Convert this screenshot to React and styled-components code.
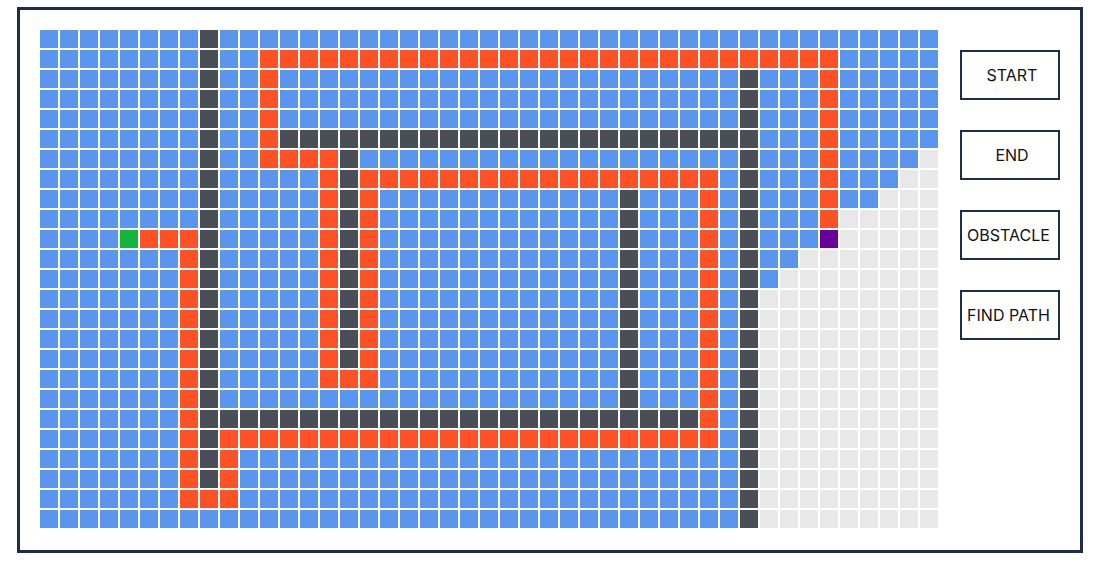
import React from 'react';
import styled, { createGlobalStyle } from 'styled-components';

const COLS = 45;
const ROWS = 25;

const walls = [
  // [c1, r1, c2, r2]
  [8, 0, 8, 22],
  [12, 5, 35, 5],
  [35, 2, 35, 24],
  [15, 6, 15, 16],
  [29, 8, 29, 18],
  [9, 19, 32, 19],
];

const path = [
  [5, 10, 7, 10],
  [7, 10, 7, 23],
  [7, 23, 9, 23],
  [9, 20, 9, 23],
  [9, 20, 33, 20],
  [33, 7, 33, 20],
  [16, 7, 33, 7],
  [16, 7, 16, 17],
  [14, 17, 16, 17],
  [14, 6, 14, 17],
  [11, 6, 14, 6],
  [11, 1, 11, 6],
  [11, 1, 39, 1],
  [39, 1, 39, 9],
];

// first unvisited column for each row, the rest stays blue
const unvisitedFrom = { 6: 44, 7: 43, 8: 42, 9: 40, 10: 40, 11: 38, 12: 37 };

const inSegments = (segments, c, r) =>
  segments.some(([c1, r1, c2, r2]) => c >= c1 && c <= c2 && r >= r1 && r <= r2);

const cellType = (c, r) => {
  if (c === 4 && r === 10) return 'start';
  if (c === 39 && r === 10) return 'end';
  if (inSegments(walls, c, r)) return 'wall';
  if (inSegments(path, c, r)) return 'path';
  const from = r >= 13 ? 36 : unvisitedFrom[r];
  if (from !== undefined && c >= from) return 'empty';
  return 'visited';
};

const colors = {
  visited: '#5a96ee',
  wall: '#4a4e57',
  path: '#ff5126',
  start: '#15b53b',
  end: '#6a009c',
  empty: '#e8e8e8',
};

const buttons = [
  { label: 'START' },
  { label: 'END' },
  { label: 'OBSTACLE', wide: true },
  { label: 'FIND PATH', wide: true },
];

const App = () => {
  const cells = [];
  for (let r = 0; r < ROWS; r++) {
    for (let c = 0; c < COLS; c++) {
      cells.push(<Cell key={r + '-' + c} $type={cellType(c, r)} />);
    }
  }

  return (
    <>
      <GlobalStyle />
      <Page>
        <Board>
          <Grid>{cells}</Grid>
          <Controls>
            {buttons.map((button) => (
              <Button key={button.label} $wide={button.wide}>
                {button.label}
              </Button>
            ))}
          </Controls>
        </Board>
      </Page>
    </>
  );
};

export default App;

const GlobalStyle = createGlobalStyle`
  body {
    margin: 0;
    background-color: #fff;
    font-family: 'Inter', sans-serif;
  }
`;

const Page = styled.div`
  padding: 7px 13px 11px 17px;
`;

const Board = styled.div`
  display: flex;
  box-sizing: border-box;
  width: 1066px;
  height: 546px;
  padding: 20px;
  border: 3px solid #1e2d4a;
  align-items: flex-start;
`;

const Grid = styled.div`
  display: grid;
  grid-template-columns: repeat(${COLS}, 18px);
  grid-auto-rows: 18px;
  gap: 2px;
`;

const Cell = styled.div`
  background-color: ${(props) => colors[props.$type]};
`;

const Controls = styled.div`
  display: flex;
  flex-direction: column;
  gap: 30px;
  margin-left: 22px;
  padding-top: 20px;
`;

const Button = styled.button`
  box-sizing: border-box;
  width: 100px;
  height: 50px;
  padding: 0 ${(props) => (props.$wide ? '3px' : '0')} 1px ${(props) => (props.$wide ? '0' : '4px')};
  border: 2px solid #1e2d4a;
  border-radius: 0;
  background-color: #fff;
  color: #111;
  font-family: 'Inter', sans-serif;
  font-size: 16px;
  white-space: nowrap;
  cursor: pointer;
`;
